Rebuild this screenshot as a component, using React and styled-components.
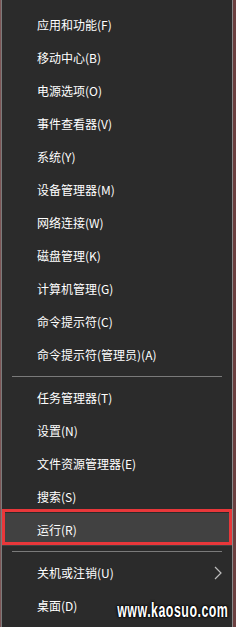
import React from 'react'
import styled, { createGlobalStyle } from 'styled-components'

const Global = createGlobalStyle`
    html, body {
        margin: 0;
        padding: 0;
        background: #2b2b2b;
    }
    #root {
        width: 236px;
        height: 627px;
    }
`

const Frame = styled.div`
    position: relative;
    width: 236px;
    height: 627px;
    display: flex;
    background: #2b2b2b;
    overflow: hidden;
    font-family: "Microsoft YaHei", "Noto Sans CJK SC", sans-serif;
`

const Edge = styled.div`
    width: ${p => p.w}px;
    flex-shrink: 0;
    background: ${p => p.color};
`

const Menu = styled.ul`
    flex: 1;
    list-style: none;
    margin: 0;
    padding: 8px 0 0 0;
    display: flex;
    flex-direction: column;
`

const Item = styled.li`
    position: relative;
    height: 33px;
    display: flex;
    align-items: center;
    justify-content: space-between;
    padding: 0 10px 0 35px;
    font-size: 12px;
    color: #ffffff;
    background: ${p => (p.active ? '#414141' : 'transparent')};
    &::after {
        content: '';
        display: ${p => (p.active ? 'block' : 'none')};
        position: absolute;
        left: 0;
        right: 0;
        top: -4px;
        bottom: 1px;
        border: 3px solid #e8373a;
    }
`

const Sep = styled.li`
    height: 10px;
    display: flex;
    align-items: center;
    padding: 0 10px 0 10px;
    &::before {
        content: '';
        flex: 1;
        height: 1px;
        background: #7a7a7a;
    }
`

const Watermark = styled.div`
    position: absolute;
    right: 8px;
    bottom: 5px;
    font-family: "Liberation Sans", Arial, sans-serif;
    font-weight: 700;
    font-size: 20px;
    letter-spacing: 0.8px;
    color: #ffffff;
    transform: scaleX(0.62);
    transform-origin: right center;
    text-shadow: 0 0 3px #000, 0 0 3px #000, 0 0 2px #000;
`

const Chevron = () => (
    <svg width="8" height="14" viewBox="0 0 8 14">
        <polyline points="1,1 7,7 1,13" fill="none" stroke="#bdbdbd" strokeWidth="1.2" />
    </svg>
)

const groups = [
    ['应用和功能(F)', '移动中心(B)', '电源选项(O)', '事件查看器(V)', '系统(Y)', '设备管理器(M)',
        '网络连接(W)', '磁盘管理(K)', '计算机管理(G)', '命令提示符(C)', '命令提示符(管理员)(A)'],
    ['任务管理器(T)', '设置(N)', '文件资源管理器(E)', '搜索(S)', '运行(R)'],
    ['关机或注销(U)', '桌面(D)'],
]

export default function App() {
    return (
        <Frame>
            <Global />
            <Edge w={1} color="#7d5556" />
            <Edge w={1} color="#7b7b7b" />
            <Menu>
                {groups.map((g, gi) => (
                    <React.Fragment key={gi}>
                        {gi > 0 && <Sep />}
                        {g.map(label => (
                            <Item key={label} active={label === '运行(R)'}>
                                <span>{label}</span>
                                {label === '关机或注销(U)' && <Chevron />}
                            </Item>
                        ))}
                    </React.Fragment>
                ))}
            </Menu>
            <Edge w={1} color="#8a8a8a" />
            <Edge w={3} color="#6b4040" />
            <Watermark>www.kaosuo.com</Watermark>
        </Frame>
    )
}
